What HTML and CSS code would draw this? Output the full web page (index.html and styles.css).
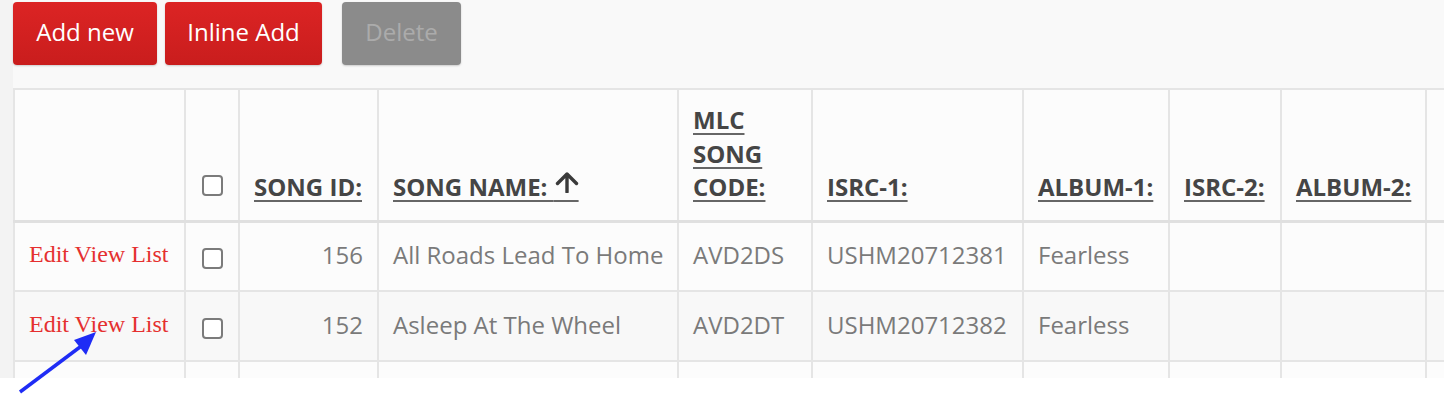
FILE: index.html
```html
<!DOCTYPE html>
<html>
<head>
<meta charset="utf-8">
<link rel="stylesheet" href="styles.css">
</head>
<body>
<div class="shot">
  <div class="page">
    <div class="toolbar">
      <button class="btn btn-red">Add new</button>
      <button class="btn btn-red">Inline Add</button>
      <button class="btn btn-grey">Delete</button>
    </div>
    <table class="grid">
      <colgroup>
        <col class="c-act"><col class="c-chk"><col class="c-id"><col class="c-name"><col class="c-mlc">
        <col class="c-isrc1"><col class="c-alb1"><col class="c-isrc2"><col class="c-alb2"><col class="c-more">
      </colgroup>
      <thead>
        <tr>
          <th></th>
          <th class="chk"><span class="box"></span></th>
          <th><a>SONG ID:</a></th>
          <th><a>SONG NAME: <span class="sort">&nbsp;&nbsp;&nbsp;&nbsp;<svg class="sort-icon" width="24" height="22" viewBox="0 0 24 22"><path d="M12 3 V21 M2.5 12.5 L12 3 L21.5 12.5" fill="none" stroke="#3a3a3a" stroke-width="3.4" stroke-linecap="round" stroke-linejoin="round"/></svg></span></a></th>
          <th><a>MLC<br>SONG<br>CODE:</a></th>
          <th><a>ISRC-1:</a></th>
          <th><a>ALBUM-1:</a></th>
          <th><a>ISRC-2:</a></th>
          <th><a>ALBUM-2:</a></th>
          <th></th>
        </tr>
      </thead>
      <tbody>
        <tr>
          <td class="act"><a>Edit</a> <a>View</a> <a>List</a></td>
          <td class="chk"><span class="box"></span></td>
          <td class="num">156</td>
          <td>All Roads Lead To Home</td>
          <td>AVD2DS</td>
          <td>USHM20712381</td>
          <td>Fearless</td>
          <td></td><td></td><td></td>
        </tr>
        <tr class="alt">
          <td class="act"><a>Edit</a> <a>View</a> <a>List</a></td>
          <td class="chk"><span class="box"></span></td>
          <td class="num">152</td>
          <td>Asleep At The Wheel</td>
          <td>AVD2DT</td>
          <td>USHM20712382</td>
          <td>Fearless</td>
          <td></td><td></td><td></td>
        </tr>
        <tr>
          <td class="act">&nbsp;</td><td></td><td></td><td></td><td></td><td></td><td></td><td></td><td></td><td></td>
        </tr>
      </tbody>
    </table>
  </div>
  <svg class="pointer" width="120" height="80" viewBox="0 0 120 80">
    <line x1="20" y1="72" x2="84" y2="24" stroke="#1f2cf5" stroke-width="3.5" stroke-linecap="butt"/>
    <polygon points="96,12 74,20 86,35" fill="#1f2cf5"/>
  </svg>
</div>
</body>
</html>
```

FILE: styles.css
```css
html, body {
  margin: 0;
  padding: 0;
  background: #ffffff;
  overflow: hidden;
}

.shot {
  position: relative;
  width: 1444px;
  height: 402px;
  overflow: hidden;
}

.page {
  height: 378px;
  overflow: hidden;
  background: #f9f9f9;
  padding-left: 13px;
  box-shadow: inset 13px 0 0 #f3f3f3;
}

.toolbar {
  display: flex;
  align-items: flex-start;
  padding-top: 2px;
  height: 86px;
}

.btn {
  font-family: "Open Sans", "Liberation Sans", sans-serif;
  font-size: 24px;
  height: 63px;
  border: 0;
  border-radius: 4px;
  padding: 0 20px 4px;
  margin-right: 8px;
  box-shadow: 0 1px 2px rgba(0,0,0,0.18);
}

.btn-red {
  background: linear-gradient(#dc2424, #c91d1d);
  color: #ffffff;
}

.btn-red:nth-child(1) { width: 144px; }
.btn-red:nth-child(2) { width: 157px; }

.btn-grey {
  background: #8b8b8b;
  color: #ababab;
  width: 119px;
  margin-left: 12px;
}

.grid {
  border-collapse: collapse;
  table-layout: fixed;
  width: 1600px;
  font-family: "Open Sans", "Liberation Sans", sans-serif;
  background: #fcfcfc;
}

.c-act { width: 171px; }
.c-chk { width: 54px; }
.c-id { width: 139px; }
.c-name { width: 300px; }
.c-mlc { width: 134px; }
.c-isrc1 { width: 211px; }
.c-alb1 { width: 146px; }
.c-isrc2 { width: 112px; }
.c-alb2 { width: 145px; }
.c-more { width: 188px; }

.grid th, .grid td {
  border: 2px solid #e5e5e5;
  padding: 0 14px;
}

.grid thead tr { height: 132px; }

.grid thead th {
  vertical-align: bottom;
  text-align: left;
  padding-bottom: 16px;
  font-size: 24px;
  font-weight: 700;
  line-height: 33.5px;
  color: #454545;
  border-bottom: 3px solid #e0e0e0;
  white-space: nowrap;
}

.grid thead th a {
  text-decoration: underline;
  text-underline-offset: 4px;
  text-decoration-thickness: 2px;
  text-decoration-color: #666;
}

.sort {
  position: relative;
}

.sort-icon {
  position: absolute;
  left: 1px;
  top: 1px;
}

.grid tbody tr { height: 70px; }

.grid tbody td {
  font-size: 24px;
  color: #7a7a7a;
  vertical-align: middle;
  white-space: nowrap;
  padding-bottom: 4px;
}

.grid tbody tr.alt td { background: #f8f8f8; }

.grid td.num { text-align: right; }

.grid td.act {
  font-family: "Liberation Serif", "Times New Roman", serif;
  font-size: 24px;
  color: #e53030;
}

.grid .chk {
  text-align: center;
  padding: 0;
}

.grid tbody td.chk { padding-bottom: 2px; }

.grid thead th.chk { padding-bottom: 24px; line-height: 20px; }

.box {
  display: inline-block;
  width: 17px;
  height: 17px;
  border: 2px solid #7b7b7b;
  border-radius: 4px;
  background: #fff;
  vertical-align: middle;
}

.pointer {
  position: absolute;
  left: 0;
  top: 320px;
}
```
